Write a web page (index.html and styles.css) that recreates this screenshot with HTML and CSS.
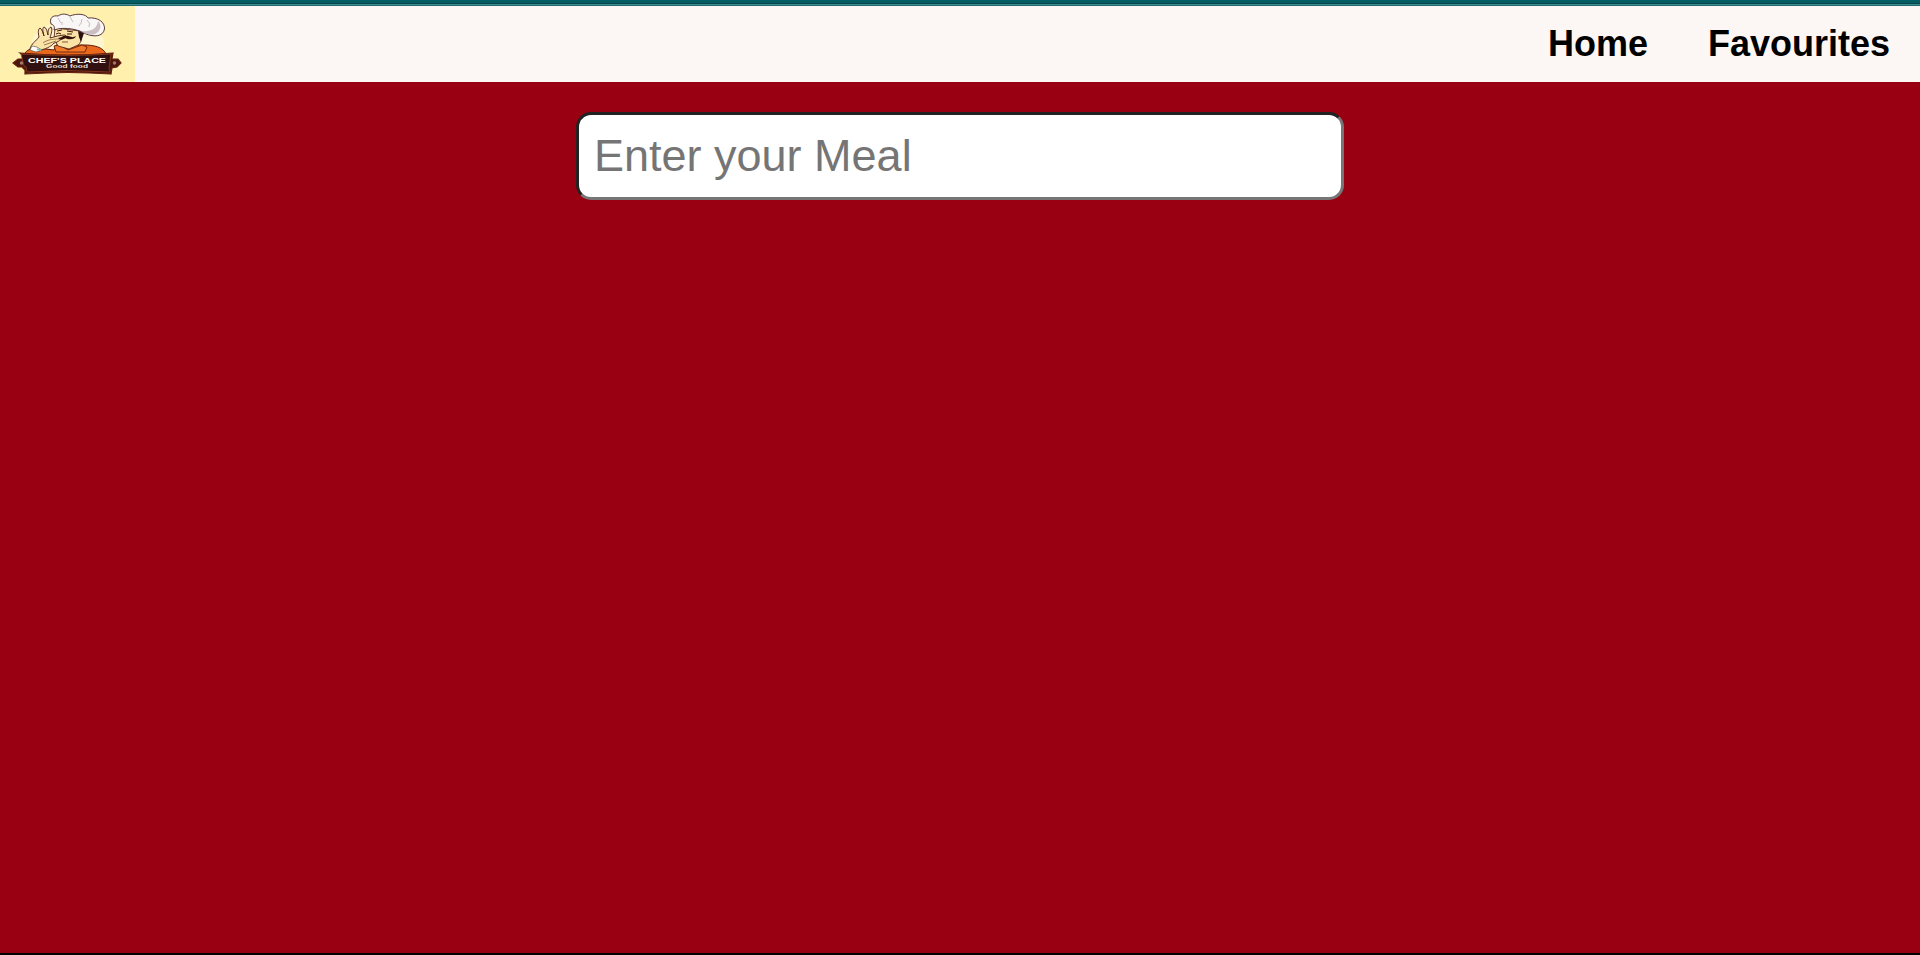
FILE: index.html
```html
<!DOCTYPE html>
<html lang="en">
<head>
<meta charset="utf-8">
<title>Chef's Place</title>
<link rel="stylesheet" href="styles.css">
</head>
<body>
<div class="strip"></div>
<header class="navbar">
  <svg class="logo" viewBox="0 0 135 76" role="img" aria-label="Chef's Place">
    <rect width="135" height="76" fill="#fff0ae"/>
    <ellipse cx="68" cy="37" rx="36" ry="21" fill="#fff6d0"/>
    <path d="M25 47 C28 43 32 42 38 42 L54 44 56 39 84 39 C94 39 103 41 106 48 L104 52 H27Z" fill="#e9681c" stroke="#5b1a0c" stroke-width="1"/>
    <path d="M54 40 L60 39 68 44 82 39 87 41 85 46 H56Z" fill="#f0792a" stroke="#6b210c" stroke-width=".9"/>
    <path d="M55 22 L80 25 81 33 C81 37 79 39 76 40 L69 43 58 40 54 33Z" fill="#fae3a4" stroke="#42160f" stroke-width=".8"/>
    <path d="M78 25 L84 27 81 36 79 31Z" fill="#2b100f"/>
    <path d="M57 25 l5 -1 M67 25 l6 1 M56 28 q3 -2 5 0 M67 28 l5 0" fill="none" stroke="#42160f" stroke-width="1"/>
    <path d="M30 43 C31 38 36 35 39 31 C38 27 38 23 40 22 C42 23 43 27 44 30 C43 26 42 22 44 21 C47 22 47 26 48 29 C48 26 48 22 51 21 C53 23 51 28 50 32 C54 31 60 29 65 29 C67 30 66 32 62 33 C59 34 59 36 54 37 C51 41 45 43 38 45Z" fill="#fbe4a7" stroke="#42160f" stroke-width=".9"/>
    <path d="M43 37 C48 33 55 33 60 33 M44 39 L56 35" fill="none" stroke="#7a4827" stroke-width=".7"/>
    <path d="M58 32 C62 32 63 29 66 30 C70 29 71 33 76 30 C75 34 68 34 65 32 C62 34 60 34 58 32Z" fill="#35110d"/>
    <path d="M62 36 l6 0" stroke="#71301c" stroke-width=".8"/>
    <path d="M32 40 L37 41 42 44 36 46 30 44Z" fill="#fff" stroke="#675b58" stroke-width=".7"/>
    <path d="M37 43 l4 1.500" stroke="#72bdad" stroke-width="1.5"/>
    <path d="M54 24 C55 21 54 19 51 18 C49 12 53 9 58 10 C62 7 67 8 70 10 C77 7 86 8 88 12 C98 11 105 16 104.500 23 C103 31 94 31 86 28 C80 24 65 20 54 24Z" fill="#f9f6f6" stroke="#48262a" stroke-width=".9"/>
    <path d="M98 15 C102 19 101 25 95 28 C89 30 85 27 81 25 C91 26 97 23 98 15Z" fill="#cbbfc4"/>
    <path d="M58 12 l3 5 M62 19 l0 -3 M70 11 l3 5 M79 20 q3 -3 3 -7 M87 14 q4 3 2 7" fill="none" stroke="#b8adb1" stroke-width=".8"/>
    <path d="M24 50 L22 53 18 53 13 57 18 61 22 61 25 64 25 68 Q68 65 111 68 L112 62 117 61 121 57 118 53 112 53 113 47 Q69 51 20 47Z" fill="#4b160f" stroke="#64200f" stroke-width="1.2"/>
    <path d="M21 48 Q68 51 111 48 L109 62 110 66 Q68 63 27 66 L26 61 24 60Z" fill="#32100f" stroke="#9a451f" stroke-width=".7"/>
    <circle cx="21.500" cy="57" r="1.700" fill="#a77862"/>
    <circle cx="114.500" cy="57" r="1.700" fill="#a77862"/>
    <text x="28" y="56.500" textLength="78" lengthAdjust="spacingAndGlyphs" class="logo-name">CHEF'S PLACE</text>
    <text x="46" y="61.700" textLength="42" lengthAdjust="spacingAndGlyphs" class="logo-tag">Good food</text>
  </svg>
  <nav class="links">
    <a class="link">Home</a>
    <a class="link">Favourites</a>
  </nav>
</header>
<main class="content">
  <input class="search" type="text" placeholder="Enter your Meal">
</main>
</body>
</html>
```
FILE: styles.css
```css
* {
  box-sizing: border-box;
}

body {
  margin: 0;
  height: 955px;
  display: flex;
  flex-direction: column;
  overflow: hidden;
  background: #990011;
  border-bottom: 2px solid #000;
  font-family: "Liberation Sans", Arial, sans-serif;
}

.strip {
  height: 6px;
  flex: none;
  background: linear-gradient(#045d63 0 3px, #03474d 3px 4px, #438b90 4px 5px, #1c6c72 5px);
}

.navbar {
  height: 76px;
  flex: none;
  display: flex;
  justify-content: space-between;
  align-items: center;
  padding-right: 30px;
  background: #fcf6f5;
}

.logo {
  display: block;
  width: 135px;
  height: 76px;
}

.logo-name {
  font: bold 8px "Liberation Sans", Arial, sans-serif;
  fill: #fff;
}

.logo-tag {
  font: bold 5px "Liberation Sans", Arial, sans-serif;
  fill: #eee0d8;
}

.links {
  display: flex;
  gap: 60px;
}

.link {
  color: #000;
  font-size: 36px;
  font-weight: bold;
  line-height: 42px;
}

.content {
  display: flex;
  justify-content: center;
  padding-top: 30px;
}

.search {
  width: 768px;
  height: 88px;
  padding: 0 15px;
  border: 3px solid;
  border-color: #222 #767676 #767676 #222;
  border-radius: 15px;
  background: #fff;
  font: 45px "Liberation Sans", Arial, sans-serif;
}

.search::placeholder {
  color: #757575;
}
```
